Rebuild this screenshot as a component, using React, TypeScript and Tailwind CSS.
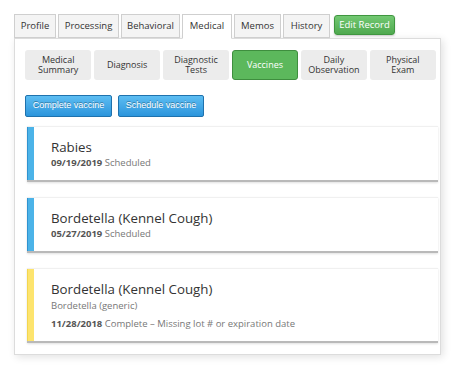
import React from "react";

const tabs = [
  { label: "Profile", w: "w-[42px]" },
  { label: "Processing", w: "w-[61px]" },
  { label: "Behavioral", w: "w-[59px]" },
  { label: "Medical", w: "w-[50px]", active: true },
  { label: "Memos", w: "w-[47px]" },
  { label: "History", w: "w-[47px]" },
];

const subTabs = [
  { label: "Medical Summary" },
  { label: "Diagnosis" },
  { label: "Diagnostic Tests" },
  { label: "Vaccines", active: true },
  { label: "Daily Observation" },
  { label: "Physical Exam" },
];

type Vaccine = {
  name: string;
  generic?: string;
  date: string;
  status: string;
  color: "blue" | "yellow";
};

const vaccines: Vaccine[] = [
  { name: "Rabies", date: "09/19/2019", status: "Scheduled", color: "blue" },
  { name: "Bordetella (Kennel Cough)", date: "05/27/2019", status: "Scheduled", color: "blue" },
  {
    name: "Bordetella (Kennel Cough)",
    generic: "Bordetella (generic)",
    date: "11/28/2018",
    status: "Complete – Missing lot # or expiration date",
    color: "yellow",
  },
];

const VaccineCard = ({ v }: { v: Vaccine }) => (
  <div className="flex bg-white border-t border-[#f0f0f0] border-b-2 border-b-[#b9b9b9] shadow-[0_1px_2px_rgba(0,0,0,0.12)]">
    <div
      className={`w-[7px] shrink-0 ${
        v.color === "blue"
          ? "bg-[#4cb3e8] border-l border-[#2f93d0]"
          : "bg-[#fde46e] border-l border-[#f3d64f]"
      }`}
    />
    <div className="pl-[17px] pt-[11px] pb-[11px]">
      <p className="text-[13.3px] leading-[18px] text-[#333]">{v.name}</p>
      {v.generic && (
        <p className="text-[9.5px] leading-[13px] mt-px text-[#777]">{v.generic}</p>
      )}
      <p className={`text-[9.5px] leading-[13px] text-[#777] ${v.generic ? "mt-[5px]" : ""}`}>
        <span className="font-bold text-[#555]">{v.date}</span> {v.status}
      </p>
    </div>
  </div>
);

export default function App() {
  return (
    <div className="w-[454px] h-[368px] bg-white pl-[14px] pt-[14px] font-['Open_Sans',sans-serif] overflow-hidden">
      {/* top tabs */}
      <div className="flex items-end h-[24px]">
        {tabs.map((t) => (
          <div
            key={t.label}
            className={`${t.w} h-[24px] mr-[2px] flex items-center justify-center text-[9.5px] text-[#333] border border-[#cfcfcf] ${
              t.active ? "bg-white border-b-white relative z-10 -mb-px h-[25px]" : "bg-[#f4f4f4]"
            }`}
          >
            {t.label}
          </div>
        ))}
        <div className="ml-[2px] self-start mt-px w-[61px] h-[20px] flex items-center justify-center rounded-[3px] border border-[#3f963f] bg-gradient-to-b from-[#72c872] to-[#4fa94f] text-white text-[9.5px] shadow-[0_1px_2px_rgba(0,0,0,0.2)]">
          Edit Record
        </div>
      </div>

      {/* panel */}
      <div className="w-[427px] h-[317px] bg-white border border-[#dcdcdc] shadow-[2px_2px_8px_rgba(0,0,0,0.12)] pl-[10px] pr-[2px] pt-[11px]">
        <div className="grid grid-cols-6 gap-[2.5px] pr-[2px] h-[30px]">
          {subTabs.map((s) => (
            <div
              key={s.label}
              className={`flex items-center justify-center rounded-[3px] text-[9px] leading-[10px] ${
                s.active
                  ? "bg-[#5cb85c] border border-[#3e8e3e] text-white"
                  : "bg-[#ececec] text-[#333]"
              }`}
            >
              <span className="w-min text-center">{s.label}</span>
            </div>
          ))}
        </div>

        <div className="flex gap-[6px] mt-[15px] font-['Liberation_Sans',sans-serif]">
          <button className="w-[87px] h-[22px] rounded-[2px] border border-[#1f72ad] bg-gradient-to-b from-[#5cbdf2] to-[#2b95dc] text-white text-[9px] [text-shadow:0_-1px_0_rgba(0,0,0,0.35)]">
            Complete vaccine
          </button>
          <button className="w-[86px] h-[22px] rounded-[2px] border border-[#1f72ad] bg-gradient-to-b from-[#5cbdf2] to-[#2b95dc] text-white text-[9px] [text-shadow:0_-1px_0_rgba(0,0,0,0.35)]">
            Schedule vaccine
          </button>
        </div>

        <div className="ml-[2px] mt-[9px] flex flex-col gap-[15px]">
          {vaccines.map((v, i) => (
            <VaccineCard key={i} v={v} />
          ))}
        </div>
      </div>
    </div>
  );
}
